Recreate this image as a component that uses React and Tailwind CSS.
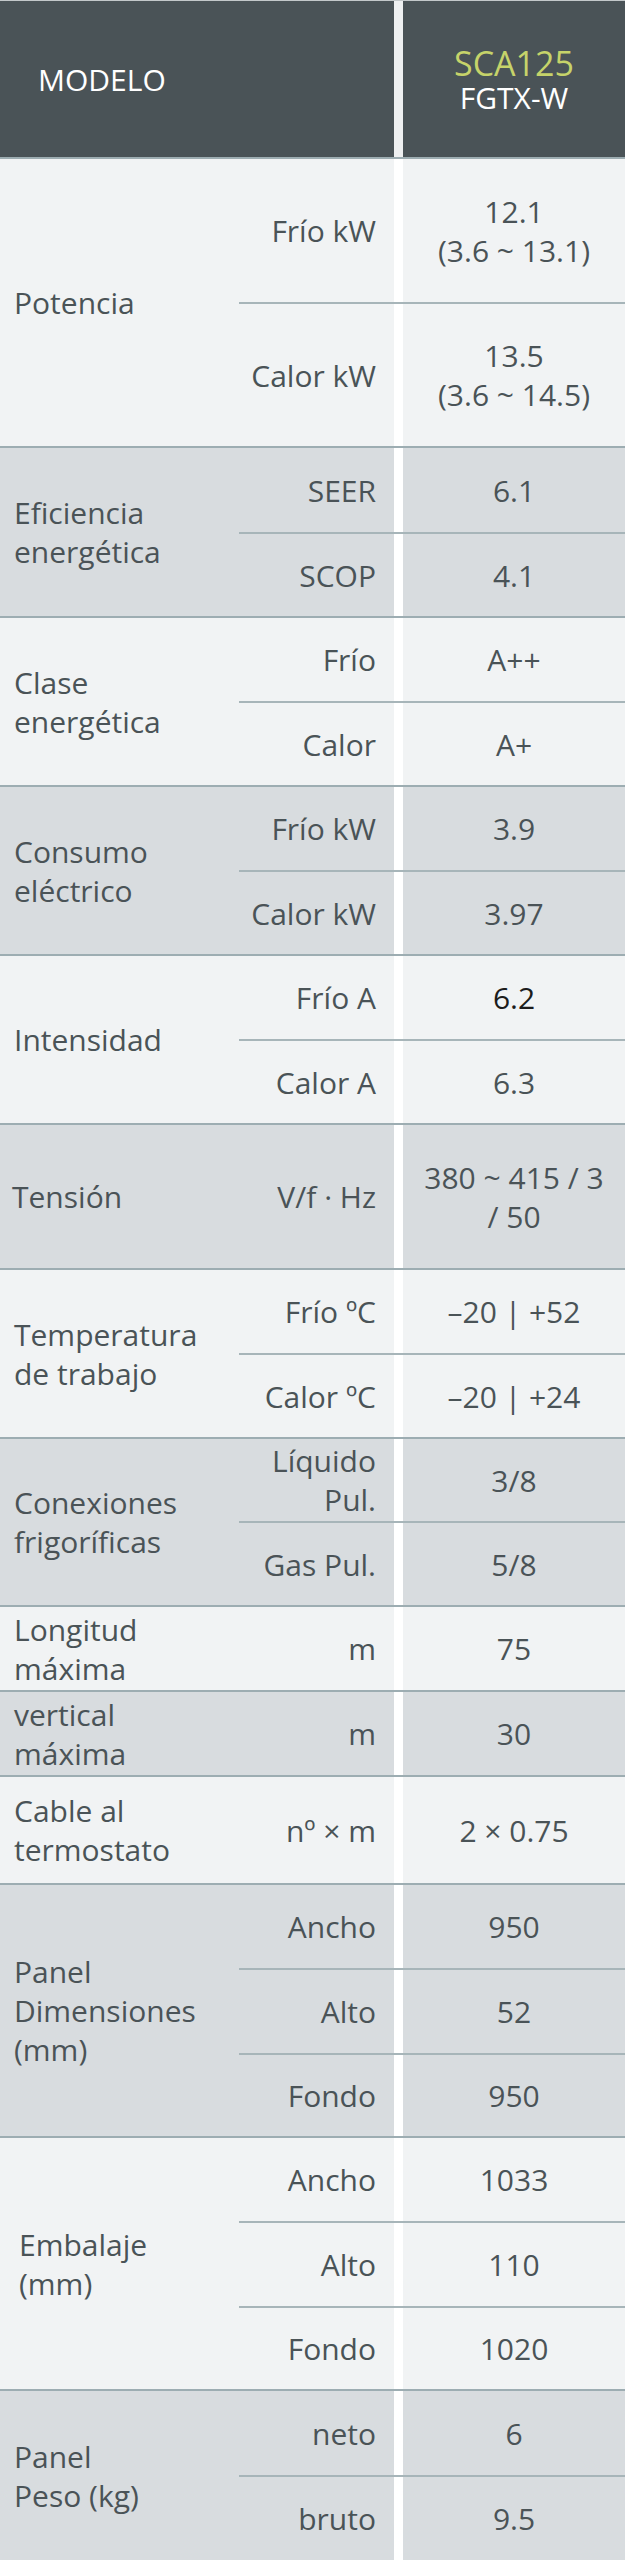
import React from 'react';

const groups = [
  { label: ['Potencia'], rows: [
    { sub: ['Frío kW'], val: ['12.1', '(3.6 ~ 13.1)'], h: 143 },
    { sub: ['Calor kW'], val: ['13.5', '(3.6 ~ 14.5)'], h: 142 },
  ] },
  { label: ['Eficiencia', 'energética'], rows: [
    { sub: ['SEER'], val: ['6.1'], h: 84 },
    { sub: ['SCOP'], val: ['4.1'], h: 82 },
  ] },
  { label: ['Clase', 'energética'], rows: [
    { sub: ['Frío'], val: ['A++'], h: 83 },
    { sub: ['Calor'], val: ['A+'], h: 82 },
  ] },
  { label: ['Consumo', 'eléctrico'], rows: [
    { sub: ['Frío kW'], val: ['3.9'], h: 83 },
    { sub: ['Calor kW'], val: ['3.97'], h: 82 },
  ] },
  { label: ['Intensidad'], rows: [
    { sub: ['Frío A'], val: ['6.2'], h: 83, dark: true },
    { sub: ['Calor A'], val: ['6.3'], h: 82 },
  ] },
  { label: ['Tensión'], pad: 'pl-[12px]', rows: [
    { sub: ['V/f · Hz'], val: ['380 ~ 415 / 3', '/ 50'], h: 143 },
  ] },
  { label: ['Temperatura', 'de trabajo'], rows: [
    { sub: ['Frío ºC'], val: ['–20 | +52'], h: 83 },
    { sub: ['Calor ºC'], val: ['–20 | +24'], h: 82 },
  ] },
  { label: ['Conexiones', 'frigoríficas'], rows: [
    { sub: ['Líquido', 'Pul.'], val: ['3/8'], h: 82 },
    { sub: ['Gas Pul.'], val: ['5/8'], h: 82 },
  ] },
  { label: ['Longitud', 'máxima'], rows: [
    { sub: ['m'], val: ['75'], h: 83 },
  ] },
  { label: ['vertical', 'máxima'], rows: [
    { sub: ['m'], val: ['30'], h: 83 },
  ] },
  { label: ['Cable al', 'termostato'], rows: [
    { sub: ['nº × m'], val: ['2 × 0.75'], h: 106 },
  ] },
  { label: ['Panel', 'Dimensiones', '(mm)'], rows: [
    { sub: ['Ancho'], val: ['950'], h: 83 },
    { sub: ['Alto'], val: ['52'], h: 83 },
    { sub: ['Fondo'], val: ['950'], h: 81 },
  ] },
  { label: ['Embalaje', '(mm)'], pad: 'pl-[19px]', rows: [
    { sub: ['Ancho'], val: ['1033'], h: 83 },
    { sub: ['Alto'], val: ['110'], h: 83 },
    { sub: ['Fondo'], val: ['1020'], h: 81 },
  ] },
  { label: ['Panel', 'Peso (kg)'], rows: [
    { sub: ['neto'], val: ['6'], h: 84 },
    { sub: ['bruto'], val: ['9.5'], h: 83 },
  ] },
];

function Lines({ lines }) {
  return lines.map((l, i) => <div key={i}>{l}</div>);
}

export default function App() {
  return (
    <div className="w-[627px] bg-white font-['Open_Sans',sans-serif] text-[30px] leading-[39px] text-[#4a5357]">
      <div className="w-[625px]">
        {/* header */}
        <div className="flex h-[157px] border-t border-[#c3c8ca] bg-[#4a5357]">
          <div className="flex w-[394px] items-center pl-[38px] text-white">MODELO</div>
          <div className="w-[9px] bg-[#eef0f1]" />
          <div className="flex flex-1 flex-col items-center justify-center">
            <div className="text-[34px] leading-[38px] text-[#c6d36a]">SCA125</div>
            <div className="leading-[32px] text-white">FGTX-W</div>
          </div>
        </div>

        {groups.map((g, gi) => (
          <div
            key={gi}
            className={`flex border-t-2 border-[#9dadb2] ${gi % 2 === 0 ? 'bg-[#f1f3f4]' : 'bg-[#d8dcdf]'}`}
          >
            <div className={`flex w-[239px] items-center ${g.pad || 'pl-[14px]'}`}>
              <div><Lines lines={g.label} /></div>
            </div>
            <div className="flex flex-1 flex-col">
              {g.rows.map((r, ri) => (
                <div
                  key={ri}
                  className={`flex ${ri > 0 ? 'border-t-2 border-[#a7b5b9]' : ''}`}
                  style={{ height: ri > 0 ? r.h + 2 : r.h }}
                >
                  <div className="flex w-[155px] items-center justify-end pr-[18px] text-right">
                    <div><Lines lines={r.sub} /></div>
                  </div>
                  <div className="w-[9px] bg-white" />
                  <div className={`flex flex-1 items-center justify-center text-center ${r.dark ? 'text-[#1c1c1c]' : ''}`}>
                    <div><Lines lines={r.val} /></div>
                  </div>
                </div>
              ))}
            </div>
          </div>
        ))}
      </div>
    </div>
  );
}
